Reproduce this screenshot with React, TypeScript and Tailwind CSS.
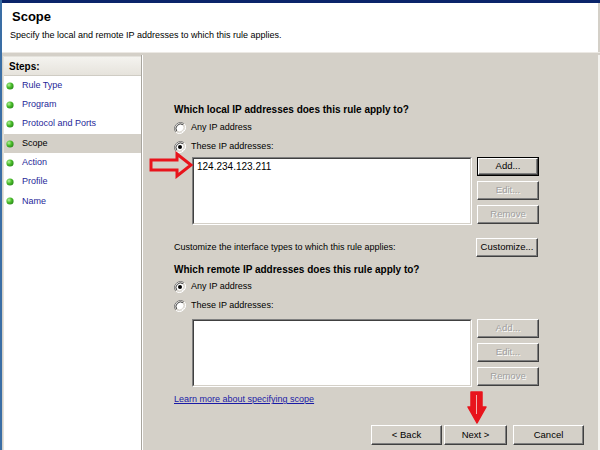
import type { ReactNode } from "react";
import clsx from "clsx";

const STEPS = [
  "Rule Type",
  "Program",
  "Protocol and Ports",
  "Scope",
  "Action",
  "Profile",
  "Name",
];

const FONT = "font-['Liberation_Sans',Tahoma,Arial,sans-serif]";

function GreenDot() {
  return (
    <svg width="8" height="8" viewBox="0 0 8 8" className="shrink-0">
      <defs>
        <radialGradient id="gd" cx="0.35" cy="0.35" r="0.7">
          <stop offset="0" stopColor="#b8f0a0" />
          <stop offset="0.5" stopColor="#4cbf2c" />
          <stop offset="1" stopColor="#2a8a1a" />
        </radialGradient>
      </defs>
      <circle cx="4" cy="4" r="3.6" fill="url(#gd)" />
    </svg>
  );
}

function Radio({ checked, label }: { checked?: boolean; label: string }) {
  return (
    <div className="flex h-[19px] items-center">
      <svg width="12" height="12" viewBox="0 0 12 12" className="mr-[5px] shrink-0">
        <path d="M10.2 1.8 A6 6 0 0 0 1.8 10.2" fill="none" stroke="#808080" strokeWidth="1" />
        <path d="M1.8 10.2 A6 6 0 0 0 10.2 1.8" fill="none" stroke="#ffffff" strokeWidth="1" />
        <circle cx="6" cy="6" r="4.6" fill="#ffffff" />
        <path d="M9.2 2.8 A4.6 4.6 0 0 0 2.8 9.2" fill="none" stroke="#404040" strokeWidth="1" />
        <path d="M2.8 9.2 A4.6 4.6 0 0 0 9.2 2.8" fill="none" stroke="#d4d0c8" strokeWidth="1" />
        {checked && <circle cx="6" cy="6" r="2" fill="#000000" />}
      </svg>
      <span className="text-[9px] text-black">{label}</span>
    </div>
  );
}

function WinButton({
  children,
  disabled,
  isDefault,
  className,
}: {
  children: ReactNode;
  disabled?: boolean;
  isDefault?: boolean;
  className?: string;
}) {
  return (
    <div
      className={clsx(
        "flex shrink-0 bg-[#d4d0c8]",
        isDefault && "border border-black",
        className,
      )}
    >
      <div className="flex flex-1 items-center justify-center border border-t-white border-l-white border-r-[#404040] border-b-[#404040] shadow-[inset_-1px_-1px_0_#808080]">
        <span
          className={clsx(
            "text-[9.5px]",
            disabled
              ? "text-[#a0a0a0] [text-shadow:1px_1px_0_#ffffff]"
              : "text-black",
          )}
        >
          {children}
        </span>
      </div>
    </div>
  );
}

function ListBox({ items }: { items: string[] }) {
  return (
    <div className="h-[68px] w-[280px] border border-t-[#808080] border-l-[#808080] border-r-white border-b-white">
      <div className="h-full w-full border border-t-[#404040] border-l-[#404040] border-r-[#d4d0c8] border-b-[#d4d0c8] bg-white px-[3px] pt-[1px]">
        {items.map((ip) => (
          <div key={ip} className="text-[10px] leading-[13px] text-black">
            {ip}
          </div>
        ))}
      </div>
    </div>
  );
}

function AddressBlock({ items, disabled }: { items: string[]; disabled?: boolean }) {
  return (
    <div className="ml-[18px] flex gap-[5px]">
      <ListBox items={items} />
      <div className="flex flex-col gap-[5px]">
        <WinButton isDefault={!disabled} disabled={disabled} className="h-[19px] w-[62px]">
          Add...
        </WinButton>
        <WinButton disabled className="h-[19px] w-[62px]">
          Edit...
        </WinButton>
        <WinButton disabled className="h-[19px] w-[62px]">
          Remove
        </WinButton>
      </div>
    </div>
  );
}

export default function App() {
  return (
    <div
      className={clsx(
        "relative flex h-[450px] w-[600px] flex-col overflow-hidden border-l-2 border-l-[#3a6ea5] bg-[#d4d0c8]",
        FONT,
      )}
    >
      {/* window title bar remnant */}
      <div className="h-[3px] shrink-0 bg-[#0a246a]" />

      {/* header */}
      <div className="flex h-[49px] shrink-0 flex-col border-r-2 border-r-[#d4d0c8] bg-white pl-[8px]">
        <div className="ml-[2px] mt-[6px] text-[13px] font-bold leading-[16px] text-black">
          Scope
        </div>
        <div className="mt-[4px] text-[9px] leading-[13px] text-black">
          Specify the local and remote IP addresses to which this rule applies.
        </div>
      </div>
      <div className="h-[1px] shrink-0 bg-[#ece9e4]" />
      <div className="h-[2px] shrink-0 bg-[#d4d0c8]" />

      <div className="flex min-h-0 flex-1">
        {/* steps sidebar */}
        <div className="ml-[1px] mt-[1px] flex w-[138px] shrink-0 flex-col border-l border-t border-[#e4e2dc] bg-white">
          <div className="flex h-[19px] items-center border-b border-[#cfccc4] bg-[linear-gradient(#f4f3ef,#e6e3dc)] pl-[5px]">
            <span className="text-[10px] font-bold text-black">Steps:</span>
          </div>
          {STEPS.map((step) => (
            <div
              key={step}
              className={clsx(
                "flex h-[19.3px] items-center gap-[8px] pl-[2px]",
                step === "Scope" && "bg-[#d4d0c8]",
              )}
            >
              <GreenDot />
              <span
                className={clsx(
                  "text-[9px]",
                  step === "Scope" ? "text-black" : "text-[#1f1f99]",
                )}
              >
                {step}
              </span>
            </div>
          ))}
        </div>
        <div className="w-[1px] shrink-0 bg-[#a8a59e]" />
        <div className="w-[1px] shrink-0 bg-white" />

        {/* main panel */}
        <div className="flex flex-1 flex-col border-r-2 border-r-[#f4f3ef] pl-[31px] pt-[45px]">
          <div className="flex h-[18px] items-center text-[10px] font-bold text-black">
            Which local IP addresses does this rule apply to?
          </div>
          <Radio label="Any IP address" />
          <Radio checked label="These IP addresses:" />
          <div className="mt-[1px]">
            <AddressBlock items={["124.234.123.211"]} />
          </div>

          <div className="mt-[13px] flex w-[364px] items-center justify-between">
            <span className="text-[9px] text-black">
              Customize the interface types to which this rule applies:
            </span>
            <WinButton className="h-[19px] w-[62px]">Customize...</WinButton>
          </div>

          <div className="mt-[4px] flex h-[16px] items-center text-[10px] font-bold text-black">
            Which remote IP addresses does this rule apply to?
          </div>
          <Radio checked label="Any IP address" />
          <Radio label="These IP addresses:" />
          <div className="mt-[4px]">
            <AddressBlock items={[]} disabled />
          </div>

          <div className="mt-[6px] flex h-[14px] items-center">
            <span className="text-[9px] text-[#1a1aa6] underline">
              Learn more about specifying scope
            </span>
          </div>

          <div className="mt-[18px] flex justify-end pr-[14px]">
            <WinButton className="h-[20px] w-[71px]">&lt; Back</WinButton>
            <WinButton className="ml-[2px] h-[20px] w-[63px]">Next &gt;</WinButton>
            <WinButton className="ml-[6px] h-[20px] w-[71px]">Cancel</WinButton>
          </div>
        </div>
      </div>

      {/* annotation arrows */}
      <svg
        className="absolute left-[146px] top-[151px]"
        width="46"
        height="28"
        viewBox="0 0 46 28"
      >
        <polygon
          points="3,9 29,9 29,3 43,14 29,25 29,19 3,19"
          fill="none"
          stroke="#e8141c"
          strokeWidth="3"
          strokeLinejoin="miter"
        />
      </svg>
      <svg
        className="absolute left-[464px] top-[390px]"
        width="22"
        height="36"
        viewBox="0 0 22 36"
      >
        <polygon
          points="5,2 16,2 16,17 20,17 11,33 2,17 5,17"
          fill="#e8141c"
          stroke="#e8141c"
          strokeWidth="1.5"
          strokeLinejoin="round"
        />
        <line x1="10.5" y1="5" x2="10.5" y2="24" stroke="#f4b0b0" strokeWidth="1" />
      </svg>
    </div>
  );
}
